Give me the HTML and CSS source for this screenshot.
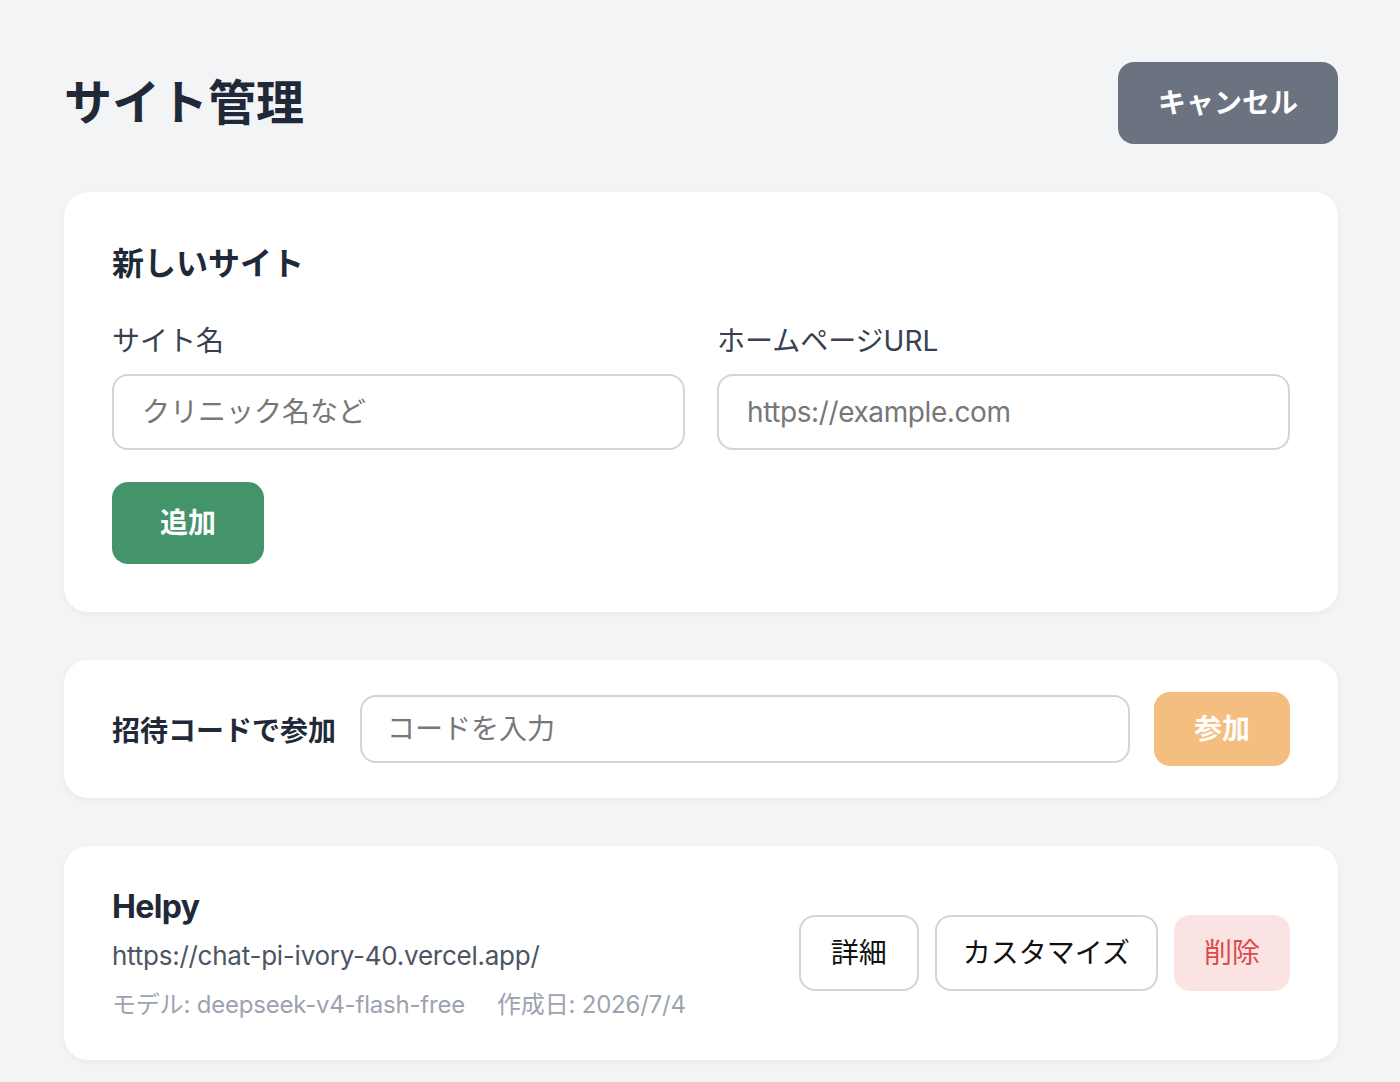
FILE: index.html
```html
<!DOCTYPE html>
<html lang="ja">
<head>
  <meta charset="UTF-8">
  <meta name="viewport" content="width=device-width, initial-scale=1.0">
  <title>サイト管理</title>
  <link rel="stylesheet" href="styles.css">
</head>
<body>
  <div class="page">
    <header class="page-header">
      <h1>サイト管理</h1>
      <button class="btn btn-cancel" type="button">キャンセル</button>
    </header>

    <section class="card new-site">
      <h2>新しいサイト</h2>
      <div class="form-grid">
        <div class="field">
          <label for="site-name">サイト名</label>
          <input type="text" id="site-name" placeholder="クリニック名など">
        </div>
        <div class="field">
          <label for="site-url">ホームページURL</label>
          <input type="text" id="site-url" class="latin" placeholder="https://example.com">
        </div>
      </div>
      <button class="btn btn-add" type="button">追加</button>
    </section>

    <section class="card join-row">
      <span class="join-label">招待コードで参加</span>
      <input type="text" class="join-input" placeholder="コードを入力">
      <button class="btn btn-join" type="button">参加</button>
    </section>

    <section class="card site-item">
      <div class="site-info">
        <h3>Helpy</h3>
        <div class="site-url">https://chat-pi-ivory-40.vercel.app/</div>
        <div class="site-meta">
          <span>モデル: deepseek-v4-flash-free</span>
          <span>作成日: 2026/7/4</span>
        </div>
      </div>
      <div class="site-actions">
        <button class="btn btn-outline" type="button">詳細</button>
        <button class="btn btn-outline btn-wide" type="button">カスタマイズ</button>
        <button class="btn btn-danger" type="button">削除</button>
      </div>
    </section>
  </div>
</body>
</html>
```

FILE: styles.css
```css
/* Global */
body {
  margin: 0;
  background-color: #f3f4f6;
  color: #1f2937;
  font-family: Inter, "Noto Sans CJK JP", sans-serif;
}

.page {
  padding: 62px 62px 0 64px;
}

/* Header */
.page-header {
  display: flex;
  justify-content: space-between;
  align-items: center;
  margin-bottom: 48px;
}

.page-header h1 {
  margin: 0 0 8px;
  font-size: 48px;
  font-weight: 700;
  color: #1f2937;
}

/* Buttons */
.btn {
  font-family: inherit;
  font-size: 28px;
  line-height: 42px;
  border: none;
  border-radius: 16px;
  cursor: pointer;
}

.btn-cancel {
  padding: 20px 40px;
  background-color: #6b7280;
  color: #fff;
  font-weight: 700;
}

.btn-add {
  margin-top: 32px;
  padding: 20px 48px;
  background-color: #43936b;
  color: #fff;
  font-weight: 700;
}

.btn-join {
  padding: 16px 40px;
  background-color: #f3be80;
  color: #fff;
  font-weight: 700;
}

.btn-outline {
  padding: 15px 30px;
  background-color: #fff;
  border: 2px solid #d1d5db;
  color: #111;
}

.btn-outline.btn-wide {
  padding: 15px 26px;
}

.btn-danger {
  padding: 15px 28px;
  background-color: #fbe3e3;
  border: 2px solid transparent;
  color: #dc4a4a;
}

/* Cards */
.card {
  background-color: #fff;
  border-radius: 24px;
  box-shadow: 0 2px 6px rgba(0, 0, 0, 0.05);
  margin-bottom: 48px;
}

.new-site {
  padding: 48px;
}

.new-site h2 {
  margin: 0 0 32px;
  font-size: 32px;
  line-height: 48px;
  font-weight: 700;
}

.form-grid {
  display: grid;
  grid-template-columns: 1fr 1fr;
  gap: 32px;
}

.field label {
  display: block;
  margin-bottom: 12px;
  font-size: 28px;
  line-height: 42px;
  color: #374151;
}

.field input,
.join-input {
  box-sizing: border-box;
  width: 100%;
  font-family: inherit;
  font-size: 28px;
  line-height: 42px;
  padding: 15px 28px;
  border: 2px solid #d1d5db;
  border-radius: 16px;
  color: #1f2937;
  background-color: #fff;
}

.field input.latin {
  letter-spacing: -0.4px;
}

.field input::placeholder,
.join-input::placeholder {
  color: #777;
}

/* Join row */
.join-row {
  display: flex;
  align-items: center;
  gap: 24px;
  padding: 32px 48px;
}

.join-label {
  font-size: 28px;
  font-weight: 700;
  white-space: nowrap;
}

.join-input {
  flex: 1;
  padding: 11px 25px;
}

/* Site list item */
.site-item {
  display: flex;
  justify-content: space-between;
  align-items: center;
  padding: 37px 48px;
}

.site-info h3 {
  margin: 0;
  font-size: 32px;
  line-height: 48px;
  font-weight: 700;
  letter-spacing: -0.6px;
  color: #1f2937;
}

.site-url {
  margin-top: 4px;
  font-size: 26px;
  line-height: 42px;
  letter-spacing: -0.25px;
  color: #4b5563;
}

.site-meta {
  display: flex;
  gap: 32px;
  margin-top: 10px;
  font-size: 24px;
  line-height: 36px;
  letter-spacing: -0.2px;
  color: #9ca3af;
}

.site-actions {
  display: flex;
  gap: 16px;
}
```
